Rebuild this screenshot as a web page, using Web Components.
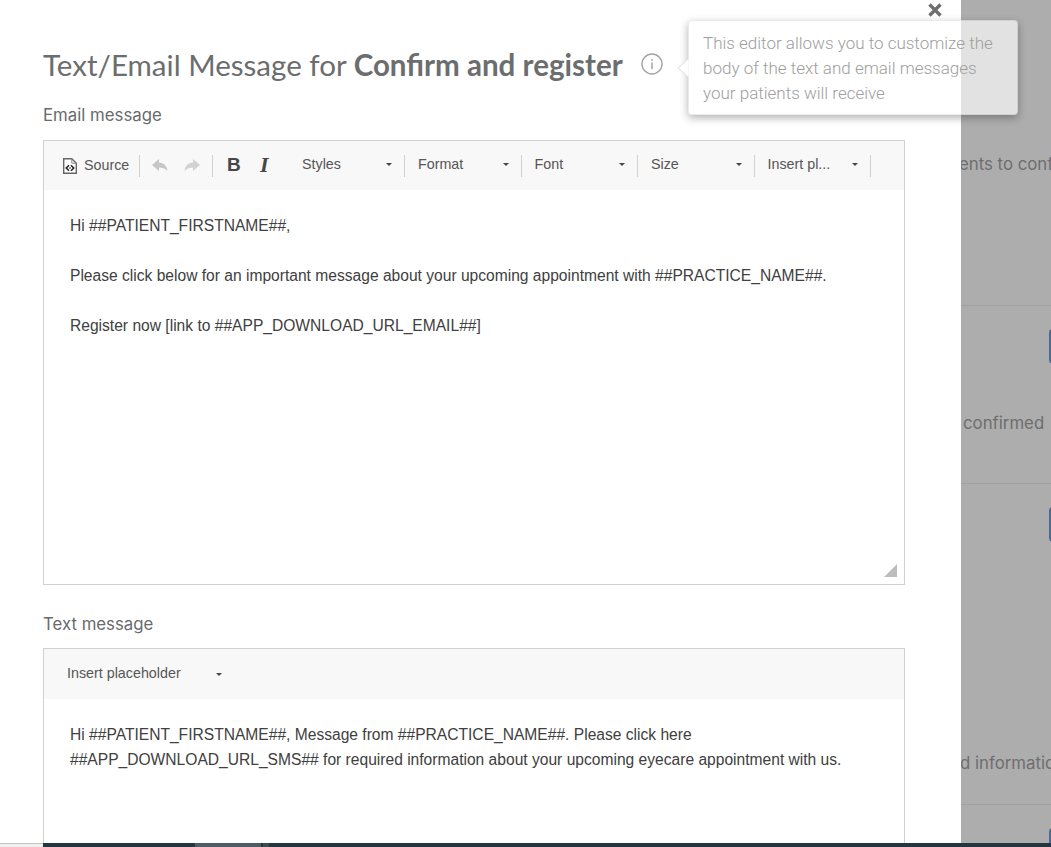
<!DOCTYPE html>
<html>
<head>
<meta charset="utf-8">
<title>Text/Email Message</title>
<style>
  html, body { margin: 0; height: 100%; overflow: hidden; background: #fff; }
</style>
</head>
<body>
<app-shell>
  <message-modal slot="modal">
    <modal-title>Text/Email Message for <b>Confirm and register</b></modal-title>
    <rich-editor label="Email message" height="394" resizable>
      <source-button slot="tools"></source-button>
      <tool-sep slot="tools"></tool-sep>
      <history-buttons slot="tools"></history-buttons>
      <tool-sep slot="tools"></tool-sep>
      <format-buttons slot="tools"></format-buttons>
      <tool-combo slot="tools" first>Styles</tool-combo>
      <tool-sep slot="tools"></tool-sep>
      <tool-combo slot="tools">Format</tool-combo>
      <tool-sep slot="tools"></tool-sep>
      <tool-combo slot="tools">Font</tool-combo>
      <tool-sep slot="tools"></tool-sep>
      <tool-combo slot="tools">Size</tool-combo>
      <tool-sep slot="tools"></tool-sep>
      <tool-combo slot="tools">Insert pl...</tool-combo>
      <tool-sep slot="tools"></tool-sep>
      <p>Hi ##PATIENT_FIRSTNAME##,</p>
      <p>Please click below for an important message about your upcoming appointment with ##PRACTICE_NAME##.</p>
      <p>Register now [link to ##APP_DOWNLOAD_URL_EMAIL##]</p>
    </rich-editor>
    <rich-editor label="Text message" height="300" compact>
      <tool-combo slot="tools" wide>Insert placeholder</tool-combo>
      <p>Hi ##PATIENT_FIRSTNAME##, Message from ##PRACTICE_NAME##. Please click here<br>##APP_DOWNLOAD_URL_SMS## for required information about your upcoming eyecare appointment with us.</p>
    </rich-editor>
  </message-modal>
  <page-behind slot="behind">
    <behind-row height="306" gap="154" text="ents to conf" shift="-2"></behind-row>
    <behind-row height="178" button gap="49" text="confirmed" shift="2"></behind-row>
    <behind-row height="321" button gap="211" text="d information" shift="-1"></behind-row>
    <behind-row height="60" button></behind-row>
  </page-behind>
  <close-mark slot="over"></close-mark>
  <editor-tip slot="over">This editor allows you to customize the body of the text and email messages your patients will receive</editor-tip>
</app-shell>

<script>
const headingFont = `"Lato", "Noto Sans", sans-serif`;
const labelFont = `"Inter", "Noto Sans", sans-serif`;
const editorFont = `"Liberation Sans", Arial, sans-serif`;

class AppShell extends HTMLElement {
    constructor() {
        super();
        this.attachShadow({ mode: "open" });
        this.shadowRoot.innerHTML = `
        <style>
        :host { display: flex; flex-direction: column; height: 847px; width: 1051px; position: relative; overflow: hidden; }
        .main { display: flex; height: 843px; overflow: hidden; }
        .strip { display: flex; height: 4px; background: #22373f; }
        .strip .shelf { width: 43px; background: #efefef; border-top: 1px solid #c4c4c4; box-sizing: border-box; }
        .strip .gap { width: 152px; }
        .strip .tab { width: 66px; background: #4b5e65; }
        .strip .tab2 { width: 6px; margin-left: 2px; background: #3a4b52; }
        </style>
        <div class="main">
          <slot name="modal"></slot>
          <slot name="behind"></slot>
        </div>
        <div class="strip"><div class="shelf"></div><div class="gap"></div><div class="tab"></div><div class="tab2"></div></div>
        <slot name="over"></slot>`;
    }
}

class MessageModal extends HTMLElement {
    constructor() {
        super();
        this.attachShadow({ mode: "open" });
        this.shadowRoot.innerHTML = `
        <style>
        :host { display: block; flex: none; width: 961px; box-sizing: border-box; padding: 0 56px 0 43px; background: #fff; overflow: hidden; }
        </style>
        <slot></slot>`;
    }
}

class ModalTitle extends HTMLElement {
    constructor() {
        super();
        this.attachShadow({ mode: "open" });
        this.shadowRoot.innerHTML = `
        <style>
        :host { display: flex; align-items: center; height: 40px; margin: 44px 0 21px; font: 400 29.55px ${headingFont}; color: #6b6d6e; white-space: pre; }
        ::slotted(b) { font-weight: 700; }
        svg { margin-left: 18px; flex: none; }
        </style>
        <span><slot></slot></span>
        <svg width="22" height="22" viewBox="0 0 22 22" fill="none">
          <circle cx="11" cy="11" r="10" stroke="#a3a3a3" stroke-width="1.4"/>
          <rect x="10.2" y="9.5" width="1.6" height="6.5" fill="#ababab"/>
          <rect x="10.2" y="6" width="1.6" height="1.8" fill="#ababab"/>
        </svg>`;
    }
}

class RichEditor extends HTMLElement {
    constructor() {
        super();
        this.attachShadow({ mode: "open" });
        const compact = this.hasAttribute("compact");
        const resizable = this.hasAttribute("resizable");
        this.shadowRoot.innerHTML = `
        <style>
        :host { display: block; margin-bottom: 28px; }
        .label { font: 400 16.8px/20px ${labelFont}; color: #686a6b; height: ${compact ? 34 : 35}px; padding-top: ${compact ? 1 : 0}px; }
        .box { border: 1px solid #d1d1d1; background: #fff; }
        .tools { display: flex; align-items: center; height: ${compact ? 50 : 49}px; background: #f8f8f8; padding-left: ${compact ? 9 : 18}px; }
        .body { height: ${this.getAttribute("height")}px; box-sizing: border-box; padding: 23px 26px 0; position: relative;
                font: 15.6px/25px ${editorFont}; color: #404040; }
        ::slotted(p) { margin: 0 0 25px; }
        .grip { position: absolute; right: 7px; bottom: 7px; }
        </style>
        <div class="label">${this.getAttribute("label")}</div>
        <div class="box">
          <div class="tools"><slot name="tools"></slot></div>
          <div class="body"><slot></slot>${resizable ? `<svg class="grip" width="13" height="13" viewBox="0 0 13 13"><path d="M13 0V13H0Z" fill="#bdbdbd"/></svg>` : ""}</div>
        </div>`;
    }
}

class ToolSep extends HTMLElement {
    constructor() {
        super();
        this.attachShadow({ mode: "open" });
        this.shadowRoot.innerHTML = `
        <style>
        :host { display: block; flex: none; width: 1px; height: 22px; background: #cfcfcf; }
        </style>`;
    }
}

class ToolCombo extends HTMLElement {
    constructor() {
        super();
        this.attachShadow({ mode: "open" });
        const wide = this.hasAttribute("wide");
        const first = this.hasAttribute("first");
        this.shadowRoot.innerHTML = `
        <style>
        :host { display: flex; flex: none; align-items: center; box-sizing: border-box; margin-bottom: ${wide ? 2 : 4}px;
                width: ${wide ? "auto" : first ? "131px" : "115.5px"}; padding-left: ${wide ? 14 : first ? 29 : 13}px;
                font: 14.3px ${editorFont}; color: #555; white-space: nowrap; }
        .text { width: ${wide ? 149 : first ? 84 : 84.5}px; flex: none; }
        .caret { width: 0; height: 0; border: 3px solid transparent; border-top-color: #444; border-bottom: 0; margin-top: 2px; }
        </style>
        <span class="text"><slot></slot></span><span class="caret"></span>`;
    }
}

class SourceButton extends HTMLElement {
    constructor() {
        super();
        this.attachShadow({ mode: "open" });
        this.shadowRoot.innerHTML = `
        <style>
        :host { display: flex; flex: none; align-items: center; width: 77px; font: 14.3px ${editorFont}; color: #555; }
        svg { margin: 0 7px 0 1px; flex: none; }
        span { margin-bottom: 1px; }
        </style>
        <svg width="14" height="16" viewBox="0 0 14 16" fill="none">
          <path d="M.7 .7H8.8L13.3 5.2V15.3H.7Z" stroke="#666" stroke-width="1.4" fill="#fff"/>
          <path d="M8.8 .7V5.2H13.3" stroke="#888"/>
          <path d="M6 7.3 3.3 10 6 12.7M8 7.3 10.7 10 8 12.7" stroke="#222" stroke-width="1.6"/>
          <rect x="6.3" y="9.2" width="1.5" height="1.6" fill="#555"/>
        </svg>
        <span>Source</span>`;
    }
}

class HistoryButtons extends HTMLElement {
    constructor() {
        super();
        this.attachShadow({ mode: "open" });
        const arrow = "M8 1 1 7 8 13V9.5C11.5 9.5 14 10.5 16.5 13 16 8 12.5 4.5 8 4.5Z";
        this.shadowRoot.innerHTML = `
        <style>
        :host { display: flex; flex: none; gap: 16px; padding: 0 11px; margin-bottom: 1px; }
        </style>
        <svg width="17" height="14" viewBox="0 0 17 14"><path d="${arrow}" fill="#c6c6c6"/></svg>
        <svg width="17" height="14" viewBox="0 0 17 14"><path d="${arrow}" fill="#d2d2d2" transform="matrix(-1 0 0 1 17 0)"/></svg>`;
    }
}

class FormatButtons extends HTMLElement {
    constructor() {
        super();
        this.attachShadow({ mode: "open" });
        this.shadowRoot.innerHTML = `
        <style>
        :host { display: flex; flex: none; align-items: center; padding-left: 14px; color: #474747; margin-bottom: 1px; }
        .b { font: 700 19px ${editorFont}; width: 33px; }
        .i { font: italic 700 22px "Liberation Serif", serif; width: 13px; }
        </style>
        <span class="b">B</span><span class="i">I</span>`;
    }
}

class BehindRow extends HTMLElement {
    constructor() {
        super();
        this.attachShadow({ mode: "open" });
        const button = this.hasAttribute("button");
        const text = this.getAttribute("text");
        const gap = this.getAttribute("gap") || 0;
        const shift = this.getAttribute("shift") || 0;
        this.shadowRoot.innerHTML = `
        <style>
        :host { display: block; box-sizing: border-box; height: ${this.getAttribute("height")}px; border-bottom: 1px solid #a1a1a1; overflow: hidden; }
        .btn { margin: 23px 0 0 88px; width: 30px; height: 35px; border-radius: 4px; background: #4c6a90; }
        .text { margin: ${gap}px 0 0 ${shift}px; font: 400 16.8px/20px ${labelFont}; color: #6e6e6e; white-space: nowrap; }
        </style>
        ${button ? `<div class="btn"></div>` : ""}
        ${text ? `<div class="text">${text}</div>` : ""}`;
    }
}

class PageBehind extends HTMLElement {
    constructor() {
        super();
        this.attachShadow({ mode: "open" });
        this.shadowRoot.innerHTML = `
        <style>
        :host { display: block; flex: 1; min-width: 0; background: #adadad; overflow: hidden; }
        </style>
        <slot></slot>`;
    }
}

class CloseMark extends HTMLElement {
    constructor() {
        super();
        this.attachShadow({ mode: "open" });
        this.shadowRoot.innerHTML = `
        <style>
        :host { position: absolute; left: 928px; top: 3px; width: 14px; height: 14px; }
        svg { display: block; }
        </style>
        <svg width="14" height="14" viewBox="0 0 14 14"><path d="M1.5 1.5 12.5 12.5M12.5 1.5 1.5 12.5" stroke="#6e6e6e" stroke-width="3.4"/></svg>`;
    }
}

class EditorTip extends HTMLElement {
    constructor() {
        super();
        this.attachShadow({ mode: "open" });
        this.shadowRoot.innerHTML = `
        <style>
        :host { position: absolute; left: 688px; top: 20px; width: 330px; height: 95px; box-sizing: border-box;
                padding: 10px 14px; background: rgba(255,255,255,.65); border: 1px solid rgba(0,0,0,.08); border-radius: 4px;
                box-shadow: 0 3px 8px rgba(0,0,0,.3); font: 300 17px/25px Roboto, sans-serif; color: #9e9e9e; }
        .arrow { position: absolute; left: -12px; top: 37px; display: block; }
        </style>
        <svg class="arrow" width="12" height="20" viewBox="0 0 12 20"><path d="M11.5 .5 1 10 11.5 19.5" fill="#fff" stroke="#dedede"/></svg><slot></slot>`;
    }
}

customElements.define("app-shell", AppShell);
customElements.define("message-modal", MessageModal);
customElements.define("modal-title", ModalTitle);
customElements.define("rich-editor", RichEditor);
customElements.define("tool-sep", ToolSep);
customElements.define("tool-combo", ToolCombo);
customElements.define("source-button", SourceButton);
customElements.define("history-buttons", HistoryButtons);
customElements.define("format-buttons", FormatButtons);
customElements.define("behind-row", BehindRow);
customElements.define("page-behind", PageBehind);
customElements.define("close-mark", CloseMark);
customElements.define("editor-tip", EditorTip);
</script>
</body>
</html>
